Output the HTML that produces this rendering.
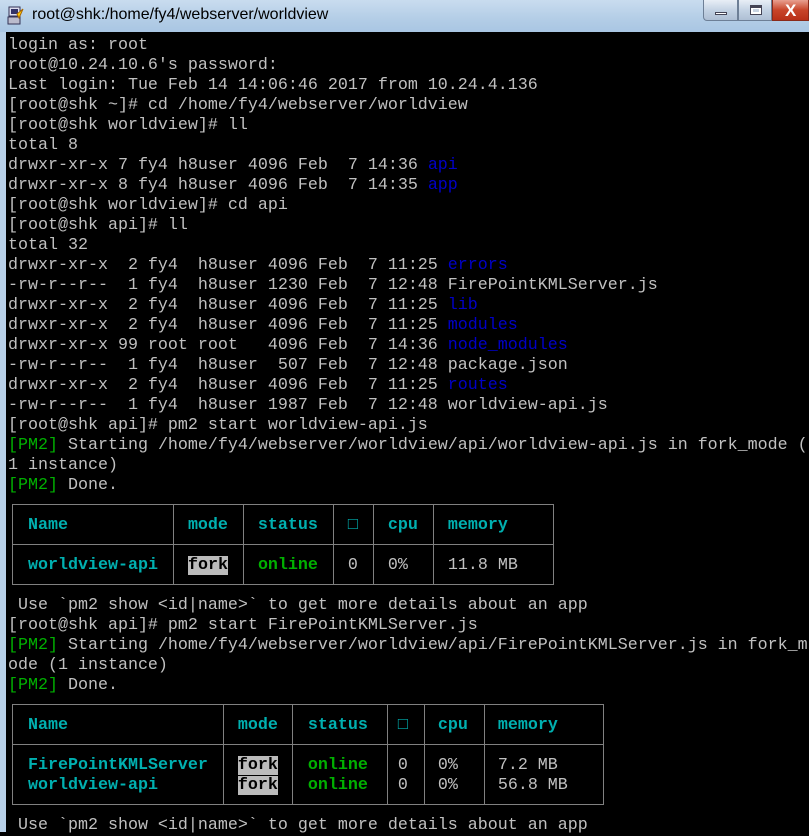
<!DOCTYPE html>
<html><head><meta charset="utf-8"><style>
*{margin:0;padding:0;box-sizing:border-box}
body{width:809px;height:832px;overflow:hidden;background:#000;position:relative}
#tb{position:absolute;left:0;top:0;width:809px;height:32px;background:linear-gradient(#c9dcef,#b3cde6 60%,#a9c6e3);}
#title{position:absolute;left:32px;top:6px;font:16px "Liberation Sans",sans-serif;color:#000;}
#ico{position:absolute;left:7px;top:6px;width:18px;height:20px;}
.btn{position:absolute;top:0;height:21px;border:1px solid #6d7f96;border-top:none;background:linear-gradient(#e8eef6,#c4d3e4 50%,#aebfd4);}
#term{position:absolute;left:0;top:32px;width:809px;height:800px;background:#000;border-left:6px solid #b8d0e8}
.l{position:absolute;left:8px;font:16.67px/20px "Liberation Mono",monospace;color:#c0c0c0;white-space:pre}
.b{color:#0000c8}.g{color:#00b000}.c{color:#00b0b0;font-weight:bold}.gb{color:#00b000;font-weight:bold}
.f{background:#bbb;color:#000;font-weight:bold}
.h{position:absolute;height:1px;background:#808080}.v{position:absolute;width:1px;background:#808080}
</style></head><body>
<div id="tb">
<svg id="ico" viewBox="0 0 18 20"><rect x="2" y="1" width="11" height="9" fill="#dde" stroke="#335" /><rect x="4" y="3" width="7" height="5" fill="#336"/><rect x="1" y="11" width="12" height="7" fill="#bbc" stroke="#335"/><path d="M10 8 L16 3 L12 12 Z" fill="#fc0" stroke="#a60"/></svg>
<div id="title">root@shk:/home/fy4/webserver/worldview</div>
<div class="btn" style="left:703px;width:35px;border-radius:0 0 0 4px"><div style="position:absolute;left:11px;top:12px;width:12px;height:3px;background:#fff;border:1px solid #445"></div></div>
<div class="btn" style="left:738px;width:34px"><div style="position:absolute;left:11px;top:5px;width:12px;height:10px;border:1px solid #445;border-top-width:3px;background:#fff"></div><div style="position:absolute;left:14px;top:9px;width:6px;height:3px;background:#c8d4e2"></div></div>
<div class="btn" style="left:772px;width:37px;background:linear-gradient(#e8a090,#c8452a 50%,#b83018);border-color:#8a2a1a"><div style="position:absolute;left:12px;top:1px;font:bold 17px 'Liberation Sans',sans-serif;color:#fff">X</div></div>
</div>
<div id="term"></div>
<div class="l" style="top:36px">login as: root</div>
<div class="l" style="top:56px">root@10.24.10.6's password:</div>
<div class="l" style="top:76px">Last login: Tue Feb 14 14:06:46 2017 from 10.24.4.136</div>
<div class="l" style="top:96px">[root@shk ~]# cd /home/fy4/webserver/worldview</div>
<div class="l" style="top:116px">[root@shk worldview]# ll</div>
<div class="l" style="top:136px">total 8</div>
<div class="l" style="top:156px">drwxr-xr-x 7 fy4 h8user 4096 Feb  7 14:36 <span class="b">api</span></div>
<div class="l" style="top:176px">drwxr-xr-x 8 fy4 h8user 4096 Feb  7 14:35 <span class="b">app</span></div>
<div class="l" style="top:196px">[root@shk worldview]# cd api</div>
<div class="l" style="top:216px">[root@shk api]# ll</div>
<div class="l" style="top:236px">total 32</div>
<div class="l" style="top:256px">drwxr-xr-x  2 fy4  h8user 4096 Feb  7 11:25 <span class="b">errors</span></div>
<div class="l" style="top:276px">-rw-r--r--  1 fy4  h8user 1230 Feb  7 12:48 FirePointKMLServer.js</div>
<div class="l" style="top:296px">drwxr-xr-x  2 fy4  h8user 4096 Feb  7 11:25 <span class="b">lib</span></div>
<div class="l" style="top:316px">drwxr-xr-x  2 fy4  h8user 4096 Feb  7 11:25 <span class="b">modules</span></div>
<div class="l" style="top:336px">drwxr-xr-x 99 root root   4096 Feb  7 14:36 <span class="b">node_modules</span></div>
<div class="l" style="top:356px">-rw-r--r--  1 fy4  h8user  507 Feb  7 12:48 package.json</div>
<div class="l" style="top:376px">drwxr-xr-x  2 fy4  h8user 4096 Feb  7 11:25 <span class="b">routes</span></div>
<div class="l" style="top:396px">-rw-r--r--  1 fy4  h8user 1987 Feb  7 12:48 worldview-api.js</div>
<div class="l" style="top:416px">[root@shk api]# pm2 start worldview-api.js</div>
<div class="l" style="top:436px"><span class="g">[PM2]</span> Starting /home/fy4/webserver/worldview/api/worldview-api.js in fork_mode (</div>
<div class="l" style="top:456px">1 instance)</div>
<div class="l" style="top:476px"><span class="g">[PM2]</span> Done.</div>
<div class="l" style="top:516px">  <span class="c">Name</span>            <span class="c">mode</span>   <span class="c">status</span>   <span class="c">□</span>   <span class="c">cpu</span>   <span class="c">memory</span></div>
<div class="l" style="top:556px">  <span class="c">worldview-api</span>   <span class="f">fork</span>   <span class="gb">online</span>   0   0%    11.8 MB</div>
<div class="h" style="left:12px;top:504px;width:542px"></div>
<div class="h" style="left:12px;top:544px;width:542px"></div>
<div class="h" style="left:12px;top:584px;width:542px"></div>
<div class="v" style="left:12px;top:504px;height:81px"></div>
<div class="v" style="left:173px;top:504px;height:81px"></div>
<div class="v" style="left:243px;top:504px;height:81px"></div>
<div class="v" style="left:333px;top:504px;height:81px"></div>
<div class="v" style="left:373px;top:504px;height:81px"></div>
<div class="v" style="left:433px;top:504px;height:81px"></div>
<div class="v" style="left:553px;top:504px;height:81px"></div>
<div class="l" style="top:596px"> Use `pm2 show &lt;id|name&gt;` to get more details about an app</div>
<div class="l" style="top:616px">[root@shk api]# pm2 start FirePointKMLServer.js</div>
<div class="l" style="top:636px"><span class="g">[PM2]</span> Starting /home/fy4/webserver/worldview/api/FirePointKMLServer.js in fork_m</div>
<div class="l" style="top:656px">ode (1 instance)</div>
<div class="l" style="top:676px"><span class="g">[PM2]</span> Done.</div>
<div class="l" style="top:716px">  <span class="c">Name</span>                 <span class="c">mode</span>   <span class="c">status</span>   <span class="c">□</span>   <span class="c">cpu</span>   <span class="c">memory</span></div>
<div class="l" style="top:756px">  <span class="c">FirePointKMLServer</span>   <span class="f">fork</span>   <span class="gb">online</span>   0   0%    7.2 MB</div>
<div class="l" style="top:776px">  <span class="c">worldview-api</span>        <span class="f">fork</span>   <span class="gb">online</span>   0   0%    56.8 MB</div>
<div class="h" style="left:12px;top:704px;width:592px"></div>
<div class="h" style="left:12px;top:744px;width:592px"></div>
<div class="h" style="left:12px;top:804px;width:592px"></div>
<div class="v" style="left:12px;top:704px;height:101px"></div>
<div class="v" style="left:223px;top:704px;height:101px"></div>
<div class="v" style="left:292px;top:704px;height:101px"></div>
<div class="v" style="left:387px;top:704px;height:101px"></div>
<div class="v" style="left:424px;top:704px;height:101px"></div>
<div class="v" style="left:484px;top:704px;height:101px"></div>
<div class="v" style="left:603px;top:704px;height:101px"></div>
<div class="l" style="top:816px"> Use `pm2 show &lt;id|name&gt;` to get more details about an app</div>
</body></html>
